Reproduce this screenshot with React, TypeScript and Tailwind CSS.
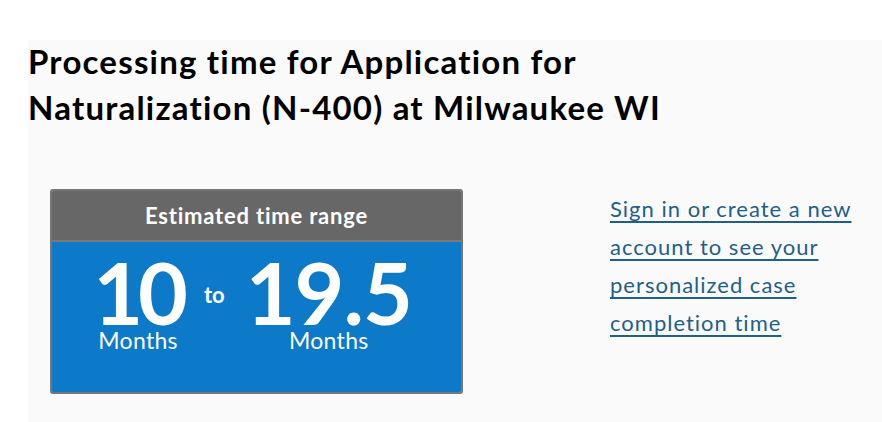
export default function App() {
  const font = { fontFamily: '"Lato", "Liberation Sans", sans-serif' };
  return (
    <div className="w-[882px] h-[422px] bg-white pt-[40px] pl-[28px]" style={font}>
      <div className="h-[382px] bg-[#fafafa] flex flex-col items-start">
        <h1 className="-mt-[2px] text-[33px] leading-[46px] font-bold text-black tracking-[1.2px]">
          Processing time for Application for
          <br />
          Naturalization (N-400) at Milwaukee WI
        </h1>
        <div className="flex mt-[59px] ml-[22px]">
          <div className="w-[413px] h-[205px] border-2 border-[#777777] rounded-[3px] overflow-hidden flex flex-col">
            <div className="h-[51px] bg-[#676767] border-b-2 border-[#7a7a7a] flex items-center justify-center text-white text-[22px] font-bold tracking-[0.8px]">
              Estimated time range
            </div>
            <div className="flex-1 bg-[#0c79c9] text-white flex justify-center pt-[10px] pr-[8px]">
              <div className="flex flex-col items-center">
                <div className="text-[86px] leading-[80px] font-bold tracking-[-5px]">10</div>
                <div className="text-[23px] leading-[28px] -mt-[6px] tracking-[0.3px]">Months</div>
              </div>
              <div className="text-[22px] font-bold mt-[26px] mx-[21px]">to</div>
              <div className="flex flex-col items-center">
                <div className="text-[86px] leading-[80px] font-bold tracking-[-1px]">19.5</div>
                <div className="text-[23px] leading-[28px] -mt-[6px] tracking-[0.3px]">Months</div>
              </div>
            </div>
          </div>
          <a href="#" className="ml-[147px] mt-[1px] w-[260px] text-[22px] leading-[38px] tracking-[1px] text-[#1f5f8b] underline decoration-2 underline-offset-[4px]">
            Sign in or create a new account to see your personalized case completion time
          </a>
        </div>
      </div>
    </div>
  );
}
